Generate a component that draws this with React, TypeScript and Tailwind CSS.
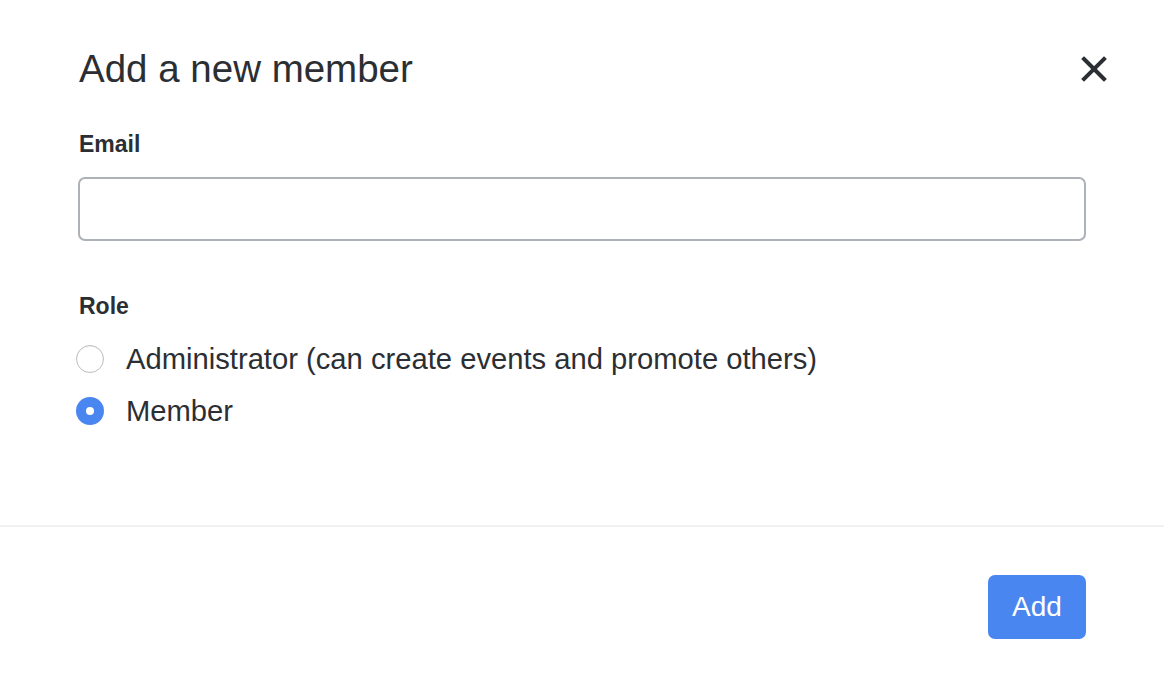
import { useState } from "react";

const ROLES = [
  { key: "admin", label: "Administrator (can create events and promote others)" },
  { key: "member", label: "Member" },
] as const;

type RoleKey = typeof ROLES[number]["key"];

export default function App() {
  const [email, setEmail] = useState("");
  const [role, setRole] = useState<RoleKey>("member");

  return (
    <div className="w-[1164px] h-[684px] bg-white text-[#2b2f33] font-['Liberation_Sans',Arial,sans-serif] flex flex-col">
      {/* Body */}
      <div className="px-[78px] pt-[46px] flex flex-col h-[525px]">
        <div className="flex items-start justify-between">
          <h2 className="text-[38.5px] leading-[46px] font-normal pl-px">Add a new member</h2>
          <button type="button" className="mt-[9px] mr-[-22px] w-[28px] h-[28px] flex items-center justify-center text-[#2b2f33]">
            <svg width="26" height="26" viewBox="0 0 26 26" fill="none" stroke="currentColor" strokeWidth="4" strokeLinecap="square">
              <path d="M3 3L23 23M23 3L3 23" />
            </svg>
          </button>
        </div>

        <label className="mt-[39px] text-[23px] leading-[26px] font-bold pl-px">Email</label>
        <input
          type="email"
          value={email}
          onChange={e => setEmail(e.target.value)}
          className="mt-[20px] h-[64px] w-full rounded-[7px] border-2 border-[#adb1b8] px-4 text-[28px] outline-none"
        />

        <label className="mt-[52px] text-[23px] leading-[26px] font-bold pl-px">Role</label>
        <div className="mt-[23px] flex flex-col gap-[18px]">
          {ROLES.map(r => (
            <button
              key={r.key}
              type="button"
              onClick={() => setRole(r.key)}
              className="-ml-[2px] flex items-center gap-[22px] text-left"
            >
              {role === r.key ? (
                <span className="w-[28px] h-[28px] rounded-full bg-[#4a86f0] flex items-center justify-center">
                  <span className="w-[8px] h-[8px] rounded-full bg-white" />
                </span>
              ) : (
                <span className="w-[28px] h-[28px] rounded-full border border-[#bdbdbd] bg-white shadow-[inset_0_1px_1px_rgba(0,0,0,0.05)]" />
              )}
              <span className="text-[29.2px] leading-[34px]">{r.label}</span>
            </button>
          ))}
        </div>
      </div>

      {/* Footer */}
      <div className="border-t-2 border-[#f1f1f1] flex justify-end px-[78px] pt-[48px]">
        <button type="button" className="w-[98px] h-[64px] rounded-[7px] bg-[#4a86f0] text-white text-[28px]">
          Add
        </button>
      </div>
    </div>
  );
}
